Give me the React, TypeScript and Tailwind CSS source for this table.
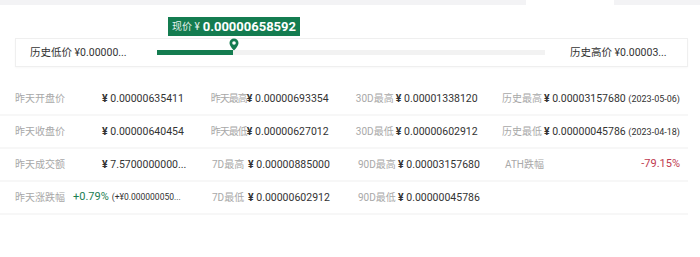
import type { ReactNode } from "react";

type Cell = {
  label: string;
  value?: ReactNode;
};

const rows: Cell[][] = [
  [
    { label: "昨天开盘价", value: <Price v="0.00000635411" /> },
    { label: "昨天最高", value: <Price v="0.00000693354" /> },
    { label: "30D最高", value: <Price v="0.00001338120" /> },
    {
      label: "历史最高",
      value: (
        <>
          <Price v="0.00003157680" />{" "}
          <span className="text-[9px]">(2023-05-06)</span>
        </>
      ),
    },
  ],
  [
    { label: "昨天收盘价", value: <Price v="0.00000640454" /> },
    { label: "昨天最低", value: <Price v="0.00000627012" /> },
    { label: "30D最低", value: <Price v="0.00000602912" /> },
    {
      label: "历史最低",
      value: (
        <>
          <Price v="0.00000045786" />{" "}
          <span className="text-[9px]">(2023-04-18)</span>
        </>
      ),
    },
  ],
  [
    { label: "昨天成交额", value: <Price v="7.5700000000..." /> },
    { label: "7D最高", value: <Price v="0.00000885000" /> },
    { label: "90D最高", value: <Price v="0.00003157680" /> },
    { label: "ATH跌幅" },
  ],
  [
    { label: "昨天涨跌幅" },
    { label: "7D最低", value: <Price v="0.00000602912" /> },
    { label: "90D最低", value: <Price v="0.00000045786" /> },
    { label: "" },
  ],
];

function Price({ v }: { v: string }) {
  return (
    <span>
      <span className="font-bold">¥</span> {v}
    </span>
  );
}

const labelWidths = ["w-[87px]", "w-[36px]", "w-[40px]", "w-[42px]"];
const colWidths = ["w-[197px]", "w-[146px]", "w-[147px]", "flex-1"];

function Row({ cells, index }: { cells: Cell[]; index: number }) {
  return (
    <div className="flex items-center h-[33px] pl-[15px] pr-[8px] border-b-2 border-[#f7f7f7]">
      {cells.map((cell, i) => (
        <div key={i} className={`${colWidths[i]} flex items-center whitespace-nowrap`}>
          <div
            className={`${labelWidths[i]} shrink-0 text-[10px] text-[#a8a8a8] ${
              i === 1 && cell.label.startsWith("昨天") ? "tracking-[-1px]" : ""
            }`}
          >
            {cell.label}
          </div>
          {cell.value && <div className="text-[10.5px] text-[#333]">{cell.value}</div>}
          {index === 3 && i === 0 && (
            <div className="-ml-[29px] flex items-baseline gap-[3px]">
              <span className="text-[11px] text-[#1b7d52]">+0.79%</span>
              <span className="text-[8.5px] text-[#333]">(+¥0.000000050...</span>
            </div>
          )}
          {index === 2 && i === 3 && (
            <div className="ml-auto text-[11px] text-[#c0394f]">-79.15%</div>
          )}
        </div>
      ))}
    </div>
  );
}

export default function App() {
  return (
    <div className="w-[700px] h-[257px] bg-white overflow-hidden font-['Roboto','Noto_Sans_CJK_SC',sans-serif]">
      <div className="flex h-[5px]">
        <div className="w-[526px] bg-[#f3f3f5]" />
        <div className="w-[88px] bg-white" />
        <div className="flex-1 bg-[#f3f3f5]" />
      </div>

      <div className="mt-[33px] ml-[15px] w-[673px] h-[29px] border border-[#efefef] flex items-center pl-[14px] shadow-[0_1px_2px_rgba(0,0,0,0.03)]">
        <div className="w-[127px] shrink-0 text-[10.5px] text-[#333] whitespace-nowrap">
          历史低价 ¥0.00000...
        </div>
        <div className="relative w-[388px] h-[5px] bg-[#f2f2f2]">
          <div className="w-[76px] h-full bg-[#147c50]" />
          <svg
            className="absolute left-[72px] -top-[12px]"
            width="10"
            height="13"
            viewBox="0 0 10 13"
          >
            <path d="M5 0.5a4.5 4.5 0 0 1 4.5 4.5c0 3-4.5 7.5-4.5 7.5S0.5 8 0.5 5A4.5 4.5 0 0 1 5 0.5z" fill="#147c50" />
            <circle cx="5" cy="5" r="1.8" fill="#fff" />
          </svg>
          <div className="absolute left-[11px] -top-[33px] h-[19px] w-[132px] bg-[#147c50] flex items-center justify-center gap-[3px] text-white whitespace-nowrap">
            <span className="text-[10px] opacity-90">现价 ¥</span>
            <span className="text-[13px] font-bold">0.00000658592</span>
          </div>
        </div>
        <div className="ml-[25px] text-[10.5px] text-[#333] whitespace-nowrap">
          历史高价 ¥0.00003...
        </div>
      </div>

      <div className="mt-[16px] w-[688px]">
        {rows.map((cells, i) => (
          <Row key={i} cells={cells} index={i} />
        ))}
      </div>
    </div>
  );
}
